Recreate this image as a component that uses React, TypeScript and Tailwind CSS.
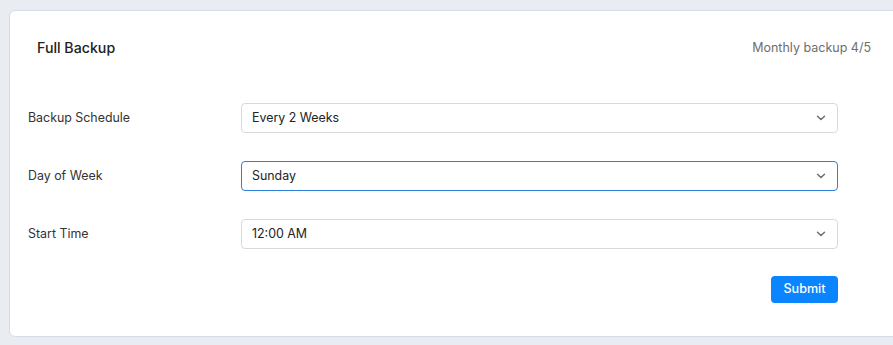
function Chevron() {
  return (
    <svg width="10" height="6" viewBox="0 0 10 6" fill="none" className="text-[#6b6b6b]">
      <path d="M1.5 1.2 5 4.6 8.5 1.2" stroke="currentColor" strokeWidth="1.4" strokeLinecap="round" strokeLinejoin="round" />
    </svg>
  );
}

function FieldRow({ label, value, focused }: { label: string; value: string; focused?: boolean }) {
  return (
    <div className="flex items-center">
      <div className="w-[213px] text-[12.4px] text-[#333333]">{label}</div>
      <div
        className={
          focused
            ? "flex h-[30px] w-[597px] items-center justify-between rounded-[4px] border border-[#2e7fd9] bg-white pl-[10px] pr-[11px] text-[12.4px] text-[#222222]"
            : "flex h-[30px] w-[597px] items-center justify-between rounded-[4px] border border-[#d9d9d9] bg-white pl-[10px] pr-[11px] text-[12.4px] text-[#222222]"
        }
      >
        <span>{value}</span>
        <Chevron />
      </div>
    </div>
  );
}

export default function App() {
  return (
    <div className="h-[345px] w-[893px] overflow-hidden bg-[#e9edf2] pl-[9px] pt-[10px] font-['Inter','Noto_Sans',sans-serif]">
      <div className="h-[327px] w-[900px] rounded-[6px] border border-[#d3dce7] bg-white">
        {/* Header */}
        <div className="flex h-[74px] items-center justify-between pl-[27px] pr-[37px]">
          <h1 className="text-[14.2px] font-medium text-[#222222]">Full Backup</h1>
          <p className="text-[12.5px] text-[#6e6e6e]">Monthly backup 4/5</p>
        </div>

        {/* Form */}
        <div className="flex flex-col gap-[28px] pl-[18px] pt-[18px]">
          <FieldRow label="Backup Schedule" value="Every 2 Weeks" />
          <FieldRow label="Day of Week" value="Sunday" focused />
          <FieldRow label="Start Time" value="12:00 AM" />
        </div>

        <div className="flex w-[828px] justify-end pt-[27px]">
          <button className="h-[27px] w-[67px] rounded-[4px] bg-[#0a84ff] text-[12.6px] font-medium text-white">
            Submit
          </button>
        </div>
      </div>
    </div>
  );
}
